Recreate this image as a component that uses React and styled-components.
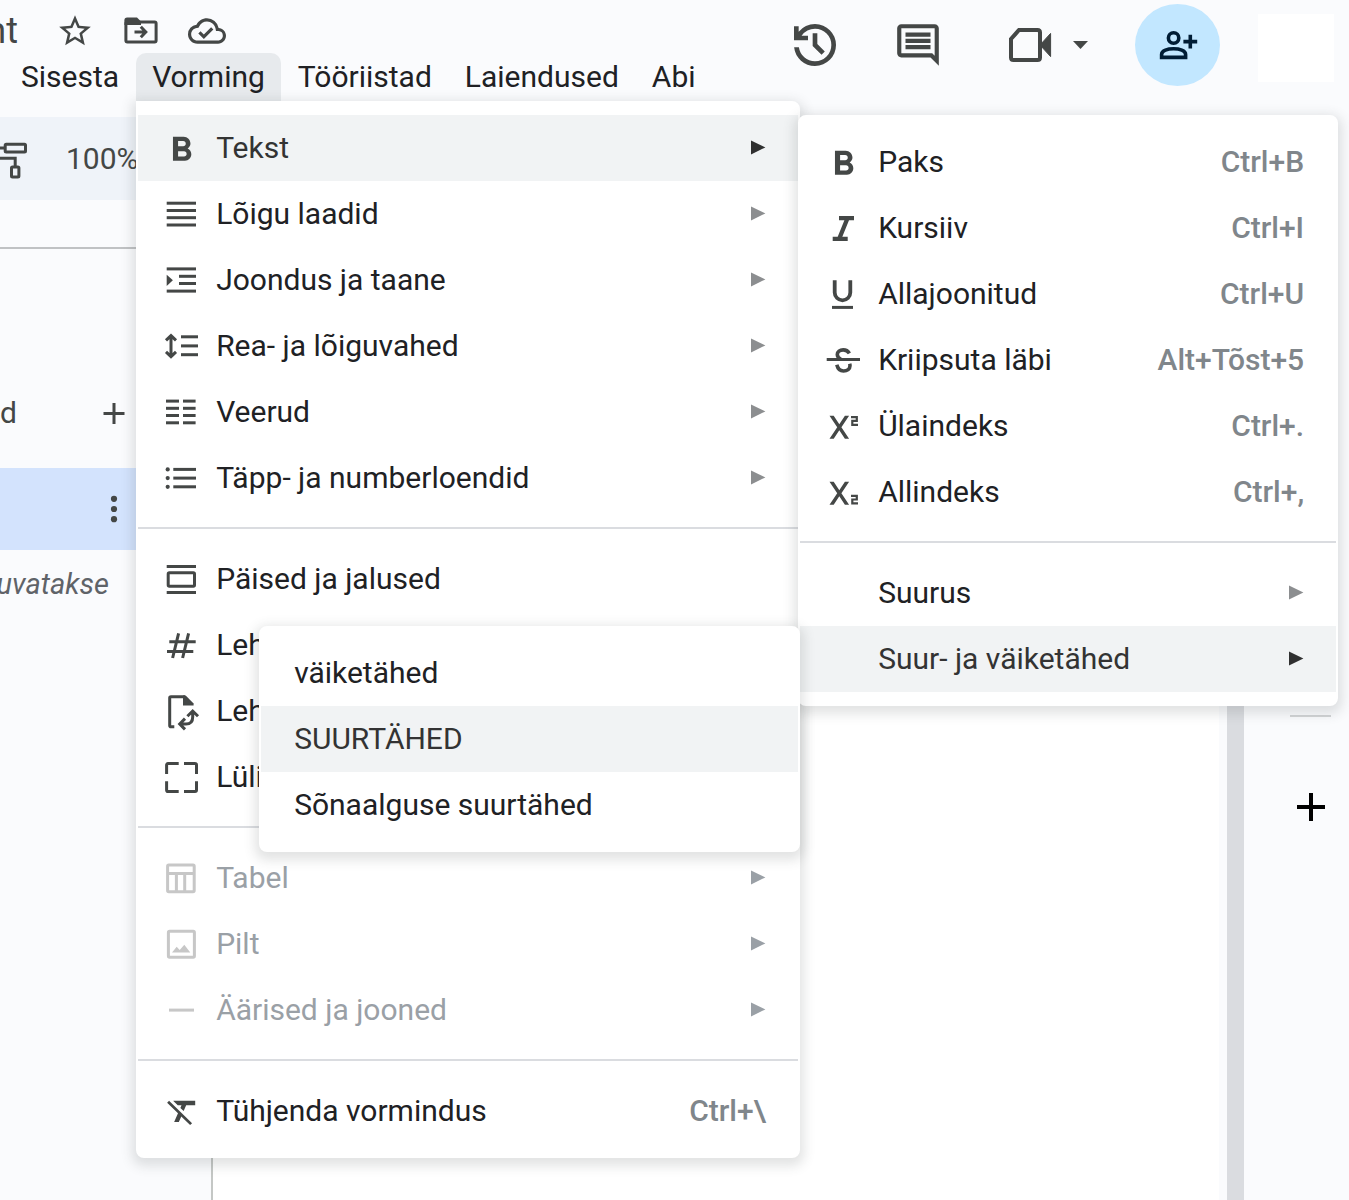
import React from 'react';
import styled, { createGlobalStyle, css } from 'styled-components';
import { MdFormatBold, MdOutlineComment, MdStarBorder, MdOutlineCloudDone } from 'react-icons/md';

const GlobalStyle = createGlobalStyle`
  * { box-sizing: border-box; }
  body {
    margin: 0;
    background: #fafbfd;
    color: #202124;
    font-family: Roboto, "Noto Sans", sans-serif;
    font-size: 30px;
    line-height: 36px;
    overflow-x: hidden;
  }
  ul { list-style: none; margin: 0; padding: 0; }
  button { font: inherit; color: inherit; background: none; border: 0; padding: 0; margin: 0; cursor: pointer; }
  svg { display: block; flex: none; overflow: visible; }
`;

/* ---------- page frame ---------- */

const Page = styled.div`
  min-height: 100vh;
  display: flex;
  flex-direction: column;
`;

const Header = styled.header`
  display: flex;
  justify-content: space-between;
  align-items: flex-start;
`;

const TitleRow = styled.div`
  display: flex;
  align-items: center;
  height: 53px;
  padding-top: 9px;
  color: #444746;
`;

const Title = styled.div`
  display: flex;
  justify-content: flex-end;
  width: 18px;
  margin-right: 24px;
  overflow: hidden;
  font-size: 36px;
  line-height: 44px;
`;

const TitleButton = styled.button`
  display: flex;
  justify-content: center;
  width: 66px;
`;

const MenuBar = styled.ul`
  display: flex;
  gap: 1px;
  padding-left: 5px;
`;

const MenuBarItem = styled.li`
  position: relative;
`;

const MenuBarButton = styled.button`
  height: 48px;
  padding: 0 16px;
  border-radius: 10px 10px 0 0;
  white-space: nowrap;
  background: ${(p) => (p.$open ? '#e7eaed' : 'transparent')};
`;

const Actions = styled.div`
  display: flex;
  align-items: center;
  height: 90px;
  padding-right: 15px;
  color: #444746;
`;

const ActionButton = styled.button`
  display: flex;
  justify-content: center;
  width: 103px;
`;

const MeetButton = styled.button`
  display: flex;
  align-items: center;
  gap: 22px;
  padding: 0 47px 0 40px;
`;

const ShareButton = styled.button`
  display: flex;
  align-items: center;
  justify-content: center;
  width: 85px;
  height: 82px;
  border-radius: 50%;
  background: #c2e7ff;
  color: #001d35;
`;

const Avatar = styled.div`
  width: 76px;
  height: 68px;
  margin: 6px 0 0 38px;
  background: #fff;
`;

const Workspace = styled.div`
  flex: 1;
  display: flex;
`;

const Main = styled.main`
  flex: 1;
  min-width: 0;
  display: flex;
  flex-direction: column;
`;

const Toolbar = styled.div`
  display: flex;
  align-items: center;
  gap: 38px;
  height: 83px;
  margin-top: 16px;
  background: #eff3f9;
  color: #444746;
`;

const Ruler = styled.div`
  height: 49px;
  border-bottom: 2px solid #c0c2c4;
`;

const Editor = styled.div`
  flex: 1;
  display: flex;
`;

const Sidebar = styled.aside`
  width: 213px;
  padding-top: 132px;
  border-right: 2px solid #c4c7c5;
  color: #444746;
`;

const SidebarRow = styled.div`
  display: flex;
  align-items: center;
  justify-content: space-between;
  width: 128px;
  height: 64px;
  margin-bottom: 23px;
`;

const SidebarTab = styled.div`
  display: flex;
  align-items: center;
  height: 82px;
  padding-left: 100px;
  background: #d3e3fd;
`;

const SidebarHint = styled.div`
  display: flex;
  justify-content: flex-end;
  width: 109px;
  padding-top: 16px;
  overflow: hidden;
  font-size: 29px;
  font-style: italic;
  color: #5f6368;
`;

const Sheet = styled.div`
  flex: 1;
  background: #fff;
`;

const Scrollbar = styled.div`
  width: 17px;
  margin-left: 8px;
  background: #dadce0;
`;

const SidePanel = styled.aside`
  display: flex;
  flex-direction: column;
  align-items: center;
  gap: 76px;
  width: 105px;
  padding: 614px 0 0 28px;
  color: #000;
`;

const PanelRule = styled.div`
  width: 41px;
  height: 2px;
  background: #d2d4d6;
`;

/* ---------- menus ---------- */

const MenuList = styled.ul`
  position: absolute;
  z-index: 1;
  width: ${(p) => p.$width}px;
  padding: 12px 0;
  border: 2px solid #fff;
  border-radius: 8px;
  background: #fff;
  box-shadow: 0 4px 12px 4px rgba(60, 64, 67, 0.15);
  ${(p) => p.$side === 'below' && css`
    top: 100%;
    left: 0;
    border-top-left-radius: 0;
  `}
  ${(p) => p.$side === 'right' && css`
    top: 0;
    left: 100%;
  `}
  ${(p) => p.$side === 'left' && css`
    top: 0;
    right: 100%;
  `}
`;

const MenuRow = styled.li`
  position: relative;
`;

const MenuButton = styled.button`
  display: flex;
  align-items: center;
  gap: 17px;
  width: 100%;
  height: 66px;
  padding: 0 32px 0 ${(p) => (p.$plain ? 33 : 25)}px;
  text-align: left;
  white-space: nowrap;
  color: ${(p) => (p.disabled ? '#9aa0a6' : p.$active ? '#333' : '#202124')};
  background: ${(p) => (p.$active ? '#f1f3f4' : 'transparent')};
`;

const MenuIcon = styled.svg`
  width: 36px;
  height: 36px;
  color: ${(p) => (p.$faded ? '#c7c7c7' : '#444746')};
`;

const Label = styled.span`
  flex: 1;
`;

const Shortcut = styled.span`
  font-weight: 500;
  color: #80868b;
`;

const ArrowIcon = styled.svg`
  width: 16px;
  height: 16px;
  fill: ${(p) => (p.$tone === 'active' ? '#303030' : p.$tone === 'disabled' ? '#9aa0a6' : '#8c8e90')};
`;

const Divider = styled.li`
  height: 2px;
  margin: 16px 0 17px;
  background: #dadce0;
`;

const Bars = ({ rows, x = 3.7, w = 29.3 }) =>
  rows.map((y) => <rect key={y} x={x} y={y} width={w} height="3" fill="currentColor" />);

const line = { fill: 'none', stroke: 'currentColor' };

const crossPath =
  'M4.5 7.7H8.7L14.3 16.2L19.9 7.7H24.1L16.4 19.2L24.1 30.7H19.9L14.3 22.2L8.7 30.7H4.5L12.2 19.2Z';

const icons = {
  bold: <MdFormatBold x="-2" y="0" size={41} />,
  italic: <path fill="currentColor" d="M14 6H29V10.3H24L17.3 26.7H22.7V31H7.7V26.7H12.7L19.4 10.3H14Z" />,
  underline: (
    <g {...line}>
      <path strokeWidth="3.8" d="M9.7 4.3V16.5a7.8 7.8 0 0 0 15.6 0V4.3" />
      <path strokeWidth="3" d="M7 31.4H28" />
    </g>
  ),
  strike: (
    <g {...line} strokeWidth="3.6">
      <path strokeWidth="3" d="M1.7 17.6H35" />
      <path d="M24.4 11.4C23 9 21 7.9 18.2 7.9C14.8 7.9 12.3 9.8 12.3 12.6C12.3 14.8 13.6 16.3 16 17.4" />
      <path d="M11.8 22.8C12.8 26.8 15 29 18.5 29C22.3 29 25 27 25 23.8C25 23 24.9 22.4 24.7 21.8" />
    </g>
  ),
  superscript: (
    <>
      <path fill="currentColor" d={crossPath} />
      <path {...line} strokeWidth="2.2" d="M26 9.2H31.8V12.9H27.3V16.8H33" />
    </>
  ),
  subscript: (
    <>
      <path fill="currentColor" d={crossPath} />
      <path {...line} strokeWidth="2.2" d="M26 21.8H31.8V25.5H27.3V29.4H33" />
    </>
  ),
  styles: <Bars rows={[5.7, 13, 20.2, 27.5]} />,
  indent: (
    <>
      <Bars rows={[5.4, 27.6]} />
      <Bars rows={[12.8, 20]} x={16} w={17} />
      <path fill="currentColor" d="M3.7 12.7L9.9 18.3L3.7 24Z" />
    </>
  ),
  spacing: (
    <>
      <Bars rows={[7.3, 16.4, 25.2]} x={18} w={17} />
      <path {...line} strokeWidth="3" d="M8 8V28M3 12.4L8 7.6L13 12.4M3 23.8L8 28.6L13 23.8" />
    </>
  ),
  columns: (
    <>
      <Bars rows={[5.6, 12.8, 20, 27.3]} x={3} w={13} />
      <Bars rows={[5.6, 12.8, 20, 27.3]} x={20} w={12.6} />
    </>
  ),
  list: (
    <>
      <Bars rows={[7.9, 16.6, 25.3]} x={10.3} w={22.7} />
      {[9.4, 18.1, 26.8].map((y) => <circle key={y} cx="4.7" cy={y} r="2.1" fill="currentColor" />)}
    </>
  ),
  headers: (
    <>
      <Bars rows={[4, 30]} />
      <rect {...line} strokeWidth="3" x="5.2" y="11.8" width="26.3" height="13.4" rx="1.2" />
    </>
  ),
  number: (
    <path {...line} strokeWidth="3" d="M6.3 14.7H32.7M4 24.5H30.3M15.6 6.3L9.6 31M25.6 6.3L19.6 31" />
  ),
  orientation: (
    <g {...line} strokeWidth="3">
      <path d="M11.3 33.7H8Q6.7 33.7 6.7 32.4V5Q6.7 3.8 8 3.8H22" />
      <path fill="currentColor" stroke="none" d="M20 2.4H22.7L30.6 10.4V12.6H20Z" />
      <path d="M29.7 19V24Q29.7 31 23 31H17M24.4 23.2L29.7 18L35 23.2M22 25.6L16.7 31L22 36.4" />
    </g>
  ),
  pageless: (
    <path
      {...line}
      strokeWidth="3"
      d="M15.7 4.6H5Q3.6 4.6 3.6 6V15M21 4.6H32Q33.5 4.6 33.5 6V15M33.5 22.3V31Q33.5 32.5 32 32.5H21M15.7 32.5H5Q3.6 32.5 3.6 31V22.3"
    />
  ),
  table: (
    <g {...line} strokeWidth="3">
      <rect x="4.6" y="5.1" width="26.6" height="26.6" rx="1.2" />
      <path d="M4.6 13.6H31.2M13.4 13.6V31M21.7 13.6V31" />
    </g>
  ),
  image: (
    <>
      <rect {...line} strokeWidth="3" x="5.4" y="5.2" width="26" height="26" rx="1.2" />
      <path fill="currentColor" d="M9 26.4L13.7 20.8L16.7 24L21.3 18.8L27.3 26.4Z" />
    </>
  ),
  border: <Bars rows={[16.6]} x={6} w={25} />,
  clear: (
    <path
      fill="currentColor"
      transform="translate(1 0.2) scale(1.56 1.52)"
      d="M3.27 5L2 6.27l6.97 6.97L6.5 19h3l1.57-3.66L16.73 21 18 19.73 3.55 5.27 3.27 5zM6 5v.18L8.82 8h2.4l-.72 1.68 2.1 2.1L14.21 8H20V5H6z"
    />
  ),
  none: null,
};

const caseMenu = {
  side: 'left',
  width: 541,
  items: [
    { label: 'väiketähed' },
    { label: 'SUURTÄHED', active: true },
    { label: 'Sõnaalguse suurtähed' },
  ],
};

const textMenu = {
  side: 'right',
  width: 540,
  items: [
    { icon: 'bold', label: 'Paks', shortcut: 'Ctrl+B' },
    { icon: 'italic', label: 'Kursiiv', shortcut: 'Ctrl+I' },
    { icon: 'underline', label: 'Allajoonitud', shortcut: 'Ctrl+U' },
    { icon: 'strike', label: 'Kriipsuta läbi', shortcut: 'Alt+Tõst+5' },
    { icon: 'superscript', label: 'Ülaindeks', shortcut: 'Ctrl+.' },
    { icon: 'subscript', label: 'Allindeks', shortcut: 'Ctrl+,' },
    null,
    { icon: 'none', label: 'Suurus', arrow: true },
    { icon: 'none', label: 'Suur- ja väiketähed', arrow: true, active: true, submenu: caseMenu },
  ],
};

const formatMenu = {
  side: 'below',
  width: 664,
  items: [
    { icon: 'bold', label: 'Tekst', arrow: true, active: true, submenu: textMenu },
    { icon: 'styles', label: 'Lõigu laadid', arrow: true },
    { icon: 'indent', label: 'Joondus ja taane', arrow: true },
    { icon: 'spacing', label: 'Rea- ja lõiguvahed', arrow: true },
    { icon: 'columns', label: 'Veerud', arrow: true },
    { icon: 'list', label: 'Täpp- ja numberloendid', arrow: true },
    null,
    { icon: 'headers', label: 'Päised ja jalused' },
    { icon: 'number', label: 'Leh' },
    { icon: 'orientation', label: 'Leh' },
    { icon: 'pageless', label: 'Lüli' },
    null,
    { icon: 'table', label: 'Tabel', arrow: true, disabled: true },
    { icon: 'image', label: 'Pilt', arrow: true, disabled: true },
    { icon: 'border', label: 'Äärised ja jooned', arrow: true, disabled: true },
    null,
    { icon: 'clear', label: 'Tühjenda vormindus', shortcut: 'Ctrl+\\' },
  ],
};

function Menu({ side, width, items }) {
  return (
    <MenuList role="menu" $side={side} $width={width}>
      {items.map((item, i) =>
        item === null ? (
          <Divider key={i} role="separator" />
        ) : (
          <MenuRow key={i} role="none">
            <MenuButton role="menuitem" disabled={item.disabled} $active={item.active} $plain={!item.icon}>
              {item.icon && (
                <MenuIcon viewBox="0 0 36 36" $faded={item.disabled} aria-hidden="true">
                  {icons[item.icon]}
                </MenuIcon>
              )}
              <Label>{item.label}</Label>
              {item.shortcut && <Shortcut>{item.shortcut}</Shortcut>}
              {item.arrow && (
                <ArrowIcon
                  viewBox="0 0 16 16"
                  $tone={item.disabled ? 'disabled' : item.active ? 'active' : 'normal'}
                  aria-hidden="true"
                >
                  <path d="M1 0.4L15.4 7.4L1 14.4Z" />
                </ArrowIcon>
              )}
            </MenuButton>
            {item.submenu && <Menu {...item.submenu} />}
          </MenuRow>
        )
      )}
    </MenuList>
  );
}

const menuBar = ['Sisesta', 'Vorming', 'Tööriistad', 'Laiendused', 'Abi'];

export default function App() {
  return (
    <Page>
      <GlobalStyle />
      <Header>
        <div>
          <TitleRow>
            <Title>nt</Title>
            <TitleButton aria-label="Tärn"><MdStarBorder size={38} /></TitleButton>
            <TitleButton aria-label="Teisalda">
              <svg width="34" height="28" viewBox="0 0 34 28" {...line} strokeWidth="3">
                <rect x="1.9" y="4.9" width="30.2" height="20.2" rx="1.5" />
                <path fill="currentColor" stroke="none" d="M.4 8V3.4Q.4 .6 3.2 .6H13L17 4.6V8Z" />
                <path d="M10.5 15H21M16.8 9.8L21.8 15L16.8 20.2" />
              </svg>
            </TitleButton>
            <TitleButton aria-label="Dokumendi olek"><MdOutlineCloudDone size={38} /></TitleButton>
          </TitleRow>
          <MenuBar role="menubar">
            {menuBar.map((name) => (
              <MenuBarItem key={name} role="none">
                <MenuBarButton role="menuitem" $open={name === 'Vorming'}>{name}</MenuBarButton>
                {name === 'Vorming' && <Menu {...formatMenu} />}
              </MenuBarItem>
            ))}
          </MenuBar>
        </div>
        <Actions>
          <ActionButton aria-label="Ajalugu">
            <svg width="56" height="56" viewBox="0 -960 960 960" fill="currentColor">
              <path d="M480-120q-138 0-240.5-91.5T122-440h82q14 104 92.5 172T480-200q117 0 198.5-81.5T760-480q0-117-81.5-198.5T480-760q-69 0-129 32t-101 88h110v80H120v-240h80v94q51-64 124.5-99T480-840q75 0 140.5 28.5t114 77q48.5 48.5 77 114T840-480q0 75-28.5 140.5t-77 114q-48.5 48.5-114 77T480-120Zm112-192L440-464v-216h80v184l128 128-56 56Z" />
            </svg>
          </ActionButton>
          <ActionButton aria-label="Kommentaarid"><MdOutlineComment size={50} /></ActionButton>
          <MeetButton aria-label="Kõne">
            <svg width="42" height="34" viewBox="0 0 42 34" {...line}>
              <path strokeWidth="4" d="M10 2H28.5Q31 2 31 4.5V29.5Q31 32 28.5 32H4.5Q2 32 2 29.5V11Z" />
              <path fill="currentColor" d="M31 17L41.6 5.4V28.6Z" />
            </svg>
            <svg width="15" height="8" viewBox="0 0 15 8" fill="currentColor">
              <path d="M0 0H15L7.5 8Z" />
            </svg>
          </MeetButton>
          <ShareButton aria-label="Jaga">
            <svg width="38" height="28" viewBox="0 0 38 28" {...line} strokeWidth="3.6">
              <circle cx="14.6" cy="7" r="5.2" />
              <path d="M2.6 26.4V23.4C2.6 19.4 8.8 17.8 14.6 17.8S26.6 19.4 26.6 23.4V26.4Z" />
              <path d="M24.4 10.6H38.2M31.3 3.7V17.5" />
            </svg>
          </ShareButton>
          <Avatar />
        </Actions>
      </Header>
      <Workspace>
        <Main>
          <Toolbar>
            <svg width="28" height="38" viewBox="0 0 28 38" {...line} strokeWidth="3">
              <rect x="5.2" y="4.3" width="20.3" height="7.8" rx="1" />
              <path d="M5 8H-3V18.2H15.2V26" />
              <rect x="11.5" y="27" width="7.4" height="10" rx="1" />
            </svg>
            <span>100%</span>
          </Toolbar>
          <Ruler />
          <Editor>
            <Sidebar>
              <SidebarRow>
                <span>d</span>
                <button aria-label="Lisa">
                  <svg width="28" height="22" viewBox="0 0 28 22" {...line} strokeWidth="3">
                    <path d="M3.5 11.5H24.5M14 1V22" />
                  </svg>
                </button>
              </SidebarRow>
              <SidebarTab>
                <button aria-label="Valikud">
                  <svg width="28" height="28" viewBox="0 0 28 28" fill="currentColor">
                    <circle cx="14" cy="3.8" r="3.1" />
                    <circle cx="14" cy="14" r="3.1" />
                    <circle cx="14" cy="24.2" r="3.1" />
                  </svg>
                </button>
              </SidebarTab>
              <SidebarHint>kuvatakse</SidebarHint>
            </Sidebar>
            <Sheet />
            <Scrollbar />
          </Editor>
        </Main>
        <SidePanel>
          <PanelRule />
          <button aria-label="Hangi lisandmooduleid">
            <svg width="28" height="28" viewBox="0 0 28 28" {...line} strokeWidth="4">
              <path d="M0 14H28M14 0V28" />
            </svg>
          </button>
        </SidePanel>
      </Workspace>
    </Page>
  );
}
